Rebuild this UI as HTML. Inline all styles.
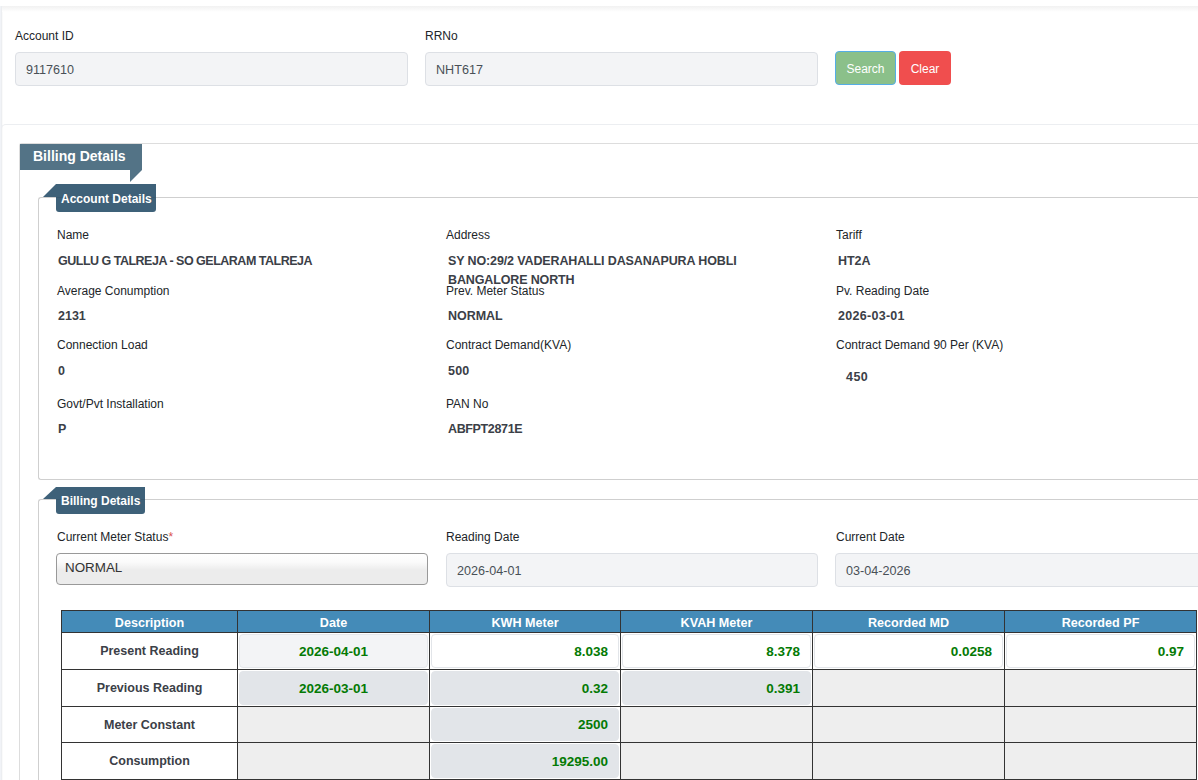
<!DOCTYPE html>
<html><head><meta charset="utf-8">
<style>
*{margin:0;padding:0;box-sizing:border-box}
html,body{width:1198px;height:780px;overflow:hidden;background:#fff;font-family:"Liberation Sans",sans-serif;color:#212529}
.a{position:absolute}
.t{position:absolute;white-space:nowrap;font-size:12px;line-height:16px;color:#212529}
.v{position:absolute;white-space:nowrap;font-size:12.5px;line-height:16px;font-weight:bold;color:#3b4047}
.inp{position:absolute;background:#f3f4f6;border:1px solid #dde0e5;border-radius:4px}
.inp span{position:absolute;white-space:nowrap;font-size:12.6px;line-height:16px;color:#495057;margin:1px 0 0 -1px}
.lstrip{position:absolute;left:0;top:6px;width:3px;height:774px;background:linear-gradient(90deg,#f1f3f7 1px,#eceef1 1px,#eceef1 2px,#fafafa 2px)}
.shadow{position:absolute;left:2px;top:6px;width:1196px;height:6px;background:linear-gradient(#f1f1f1,#fff)}
.sep{position:absolute;left:1px;top:124px;width:1300px;height:10px;border-top:1px solid #eceef1;border-left:1px solid #eceef1;border-top-left-radius:5px;background:linear-gradient(90deg,#fafafa 1px,#fff 1px)}
.fs{position:absolute;border:1px solid #cfcfcf;border-right:none;border-radius:3px 0 0 3px}
.tab{position:absolute;color:#fff;font-weight:bold;white-space:nowrap}
table{position:absolute;border-collapse:collapse;left:61px;top:610px}
td,th{border:1px solid #333;padding:0}
th{background:#448bb8;color:#fff;font-size:12px;height:22px;font-weight:bold}
td{height:37px;position:relative}
.g{color:#047a04;font-weight:bold;font-size:12px}
.th{position:absolute;top:611px;height:21px;line-height:25px;text-align:center;color:#fff;font-weight:bold;font-size:12.6px;white-space:nowrap}
.cd{position:absolute;background:#fff;text-align:center;font-weight:bold;font-size:12.5px;color:#3b4047;white-space:nowrap;display:flex;align-items:center;justify-content:center}
.ci{position:absolute;border-radius:4px;font-weight:bold;font-size:13.5px;color:#047a04;white-space:nowrap;display:flex;align-items:center;padding:0 10px}
.ci.ro{background:#f3f4f6;border:1px solid #e4e7eb;justify-content:center}
.ci.w{background:#fff;border:1px solid #e2e5e9;justify-content:flex-end}
.ci.d{background:#e2e5e9;border:1px solid #e2e5e9;justify-content:flex-end}
.ci.c{justify-content:center}
</style></head><body>
<div class="lstrip"></div>
<div class="shadow"></div>

<div class="t" style="left:15px;top:28px">Account ID</div>
<div class="inp" style="left:15px;top:52px;width:393px;height:34px"><span style="left:11px;top:8px">9117610</span></div>
<div class="t" style="left:425px;top:28px">RRNo</div>
<div class="inp" style="left:425px;top:52px;width:393px;height:34px"><span style="left:11px;top:8px">NHT617</span></div>
<div class="a" style="left:835px;top:51px;width:61px;height:34px;background:#8bc08a;border:1px solid #55ade6;border-radius:4px;color:#fff;font-size:12px;line-height:34px;text-align:center">Search</div>
<div class="a" style="left:899px;top:51px;width:52px;height:34px;background:#f04e4e;border-radius:4px;color:#fff;font-size:12px;line-height:36px;text-align:center">Clear</div>

<div class="sep"></div>

<!-- outer fieldset -->
<div class="fs" style="left:19px;top:143px;width:1200px;height:700px;border-color:#ddd"></div>
<div class="tab" style="left:20px;top:144px;width:122px;height:26px;background:#537386;font-size:14px;line-height:24px;padding-left:13px">Billing Details</div>
<svg class="a" style="left:130px;top:170px" width="12" height="12"><polygon points="0,0 12,0 0,12" fill="#537386"/></svg>

<!-- account details fieldset -->
<div class="fs" style="left:38px;top:197px;width:1200px;height:283px"></div>
<svg class="a" style="left:43px;top:184px" width="13" height="13"><polygon points="0,13 13,0 13,13" fill="#3e6179"/></svg>
<div class="tab" style="left:56px;top:184px;width:100px;height:28px;background:linear-gradient(transparent 13px,#395a71 13px,#395a71 14px,transparent 14px),#3e6179;font-size:12px;line-height:30px;padding-left:5px;border-radius:0 0 3px 3px">Account Details</div>

<div class="t" style="left:57px;top:227px">Name</div>
<div class="v" style="letter-spacing:-0.5px;left:58px;top:253px">GULLU G TALREJA - SO GELARAM TALREJA</div>
<div class="t" style="left:57px;top:283px">Average Conumption</div>
<div class="v" style="letter-spacing:0px;left:58px;top:308px">2131</div>
<div class="t" style="left:57px;top:337px">Connection Load</div>
<div class="v" style="left:58px;top:363px">0</div>
<div class="t" style="left:57px;top:396px">Govt/Pvt Installation</div>
<div class="v" style="left:58px;top:421px">P</div>

<div class="t" style="left:446px;top:227px">Address</div>
<div class="v" style="letter-spacing:-0.13px;left:448px;top:252px;line-height:19px">SY NO:29/2 VADERAHALLI DASANAPURA HOBLI<br>BANGALORE NORTH</div>
<div class="t" style="left:446px;top:283px">Prev. Meter Status</div>
<div class="v" style="letter-spacing:-0.05px;left:448px;top:308px">NORMAL</div>
<div class="t" style="left:446px;top:337px">Contract Demand(KVA)</div>
<div class="v" style="letter-spacing:0.23px;left:448px;top:363px">500</div>
<div class="t" style="left:446px;top:396px">PAN No</div>
<div class="v" style="letter-spacing:-0.36px;left:448px;top:421px">ABFPT2871E</div>

<div class="t" style="left:836px;top:227px">Tariff</div>
<div class="v" style="letter-spacing:-0.05px;left:838px;top:253px">HT2A</div>
<div class="t" style="left:836px;top:283px">Pv. Reading Date</div>
<div class="v" style="letter-spacing:0.29px;left:838px;top:308px">2026-03-01</div>
<div class="t" style="left:836px;top:337px">Contract Demand 90 Per (KVA)</div>
<div class="v" style="letter-spacing:0.47px;left:846px;top:369px">450</div>

<!-- billing details fieldset -->
<div class="fs" style="left:38px;top:499px;width:1200px;height:400px"></div>
<svg class="a" style="left:43px;top:487px" width="13" height="12"><polygon points="0,12 13,0 13,12" fill="#3e6179"/></svg>
<div class="tab" style="left:56px;top:487px;width:89px;height:27px;background:linear-gradient(transparent 12px,#395a71 12px,#395a71 13px,transparent 13px),#3e6179;font-size:12px;line-height:29px;padding-left:5px;border-radius:0 0 3px 3px">Billing Details</div>

<div class="t" style="left:57px;top:529px">Current Meter Status<span style="color:#d9534f">*</span></div>
<div class="a" style="left:56px;top:553px;width:372px;height:32px;border:1px solid #999;border-radius:4px;background:linear-gradient(#fff 0,#fbfbfb 8px,#f0f0f0 14px,#ececec 16px,#ececec 100%)"><span style="position:absolute;left:8px;top:6px;font-size:13.4px;line-height:16px;color:#333">NORMAL</span></div>
<div class="t" style="left:446px;top:529px">Reading Date</div>
<div class="inp" style="left:446px;top:553px;width:372px;height:34px"><span style="left:11px;top:8px">2026-04-01</span></div>
<div class="t" style="left:836px;top:529px">Current Date</div>
<div class="inp" style="left:835px;top:553px;width:400px;height:34px"><span style="left:11px;top:8px">03-04-2026</span></div>

<!-- TABLE -->
<div class="a" style="left:61px;top:610px;width:1135px;height:22px;background:#448bb8"></div>
<div class="th" style="left:62px;width:175px">Description</div>
<div class="th" style="left:238px;width:191px">Date</div>
<div class="th" style="left:430px;width:190px">KWH Meter</div>
<div class="th" style="left:621px;width:191px">KVAH Meter</div>
<div class="th" style="left:813px;width:191px">Recorded MD</div>
<div class="th" style="left:1005px;width:191px">Recorded PF</div>
<div class="cd" style="left:62px;top:633px;width:175px;height:36px">Present Reading</div>
<div class="ci ro c" style="left:239px;top:634px;width:189px;height:34px;text-align:center">2026-04-01</div>
<div class="ci w" style="left:431px;top:634px;width:188px;height:34px;text-align:right">8.038</div>
<div class="ci w" style="left:622px;top:634px;width:189px;height:34px;text-align:right">8.378</div>
<div class="ci w" style="left:814px;top:634px;width:189px;height:34px;text-align:right">0.0258</div>
<div class="ci w" style="left:1006px;top:634px;width:189px;height:34px;text-align:right">0.97</div>
<div class="cd" style="left:62px;top:670px;width:175px;height:36px">Previous Reading</div>
<div class="ci d c" style="left:239px;top:671px;width:189px;height:34px;text-align:center">2026-03-01</div>
<div class="ci d" style="left:431px;top:671px;width:188px;height:34px;text-align:right">0.32</div>
<div class="ci d" style="left:622px;top:671px;width:189px;height:34px;text-align:right">0.391</div>
<div class="a" style="left:813px;top:670px;width:191px;height:36px;background:#eee"></div>
<div class="a" style="left:1005px;top:670px;width:191px;height:36px;background:#eee"></div>
<div class="cd" style="left:62px;top:707px;width:175px;height:35px">Meter Constant</div>
<div class="a" style="left:238px;top:707px;width:191px;height:35px;background:#eee"></div>
<div class="ci d" style="left:431px;top:708px;width:188px;height:33px;text-align:right">2500</div>
<div class="a" style="left:621px;top:707px;width:191px;height:35px;background:#eee"></div>
<div class="a" style="left:813px;top:707px;width:191px;height:35px;background:#eee"></div>
<div class="a" style="left:1005px;top:707px;width:191px;height:35px;background:#eee"></div>
<div class="cd" style="left:62px;top:743px;width:175px;height:36px">Consumption</div>
<div class="a" style="left:238px;top:743px;width:191px;height:36px;background:#eee"></div>
<div class="ci d" style="left:431px;top:744px;width:188px;height:34px;text-align:right">19295.00</div>
<div class="a" style="left:621px;top:743px;width:191px;height:36px;background:#eee"></div>
<div class="a" style="left:813px;top:743px;width:191px;height:36px;background:#eee"></div>
<div class="a" style="left:1005px;top:743px;width:191px;height:36px;background:#eee"></div>
<div class="a" style="left:61px;top:610px;width:1px;height:170px;background:#333"></div>
<div class="a" style="left:237px;top:610px;width:1px;height:170px;background:#333"></div>
<div class="a" style="left:429px;top:610px;width:1px;height:170px;background:#333"></div>
<div class="a" style="left:620px;top:610px;width:1px;height:170px;background:#333"></div>
<div class="a" style="left:812px;top:610px;width:1px;height:170px;background:#333"></div>
<div class="a" style="left:1004px;top:610px;width:1px;height:170px;background:#333"></div>
<div class="a" style="left:1196px;top:610px;width:1px;height:170px;background:#333"></div>
<div class="a" style="left:61px;top:610px;width:1136px;height:1px;background:#333"></div>
<div class="a" style="left:61px;top:632px;width:1136px;height:1px;background:#333"></div>
<div class="a" style="left:61px;top:669px;width:1136px;height:1px;background:#333"></div>
<div class="a" style="left:61px;top:706px;width:1136px;height:1px;background:#333"></div>
<div class="a" style="left:61px;top:742px;width:1136px;height:1px;background:#333"></div>
<div class="a" style="left:61px;top:779px;width:1136px;height:1px;background:#333"></div>
</body></html>
